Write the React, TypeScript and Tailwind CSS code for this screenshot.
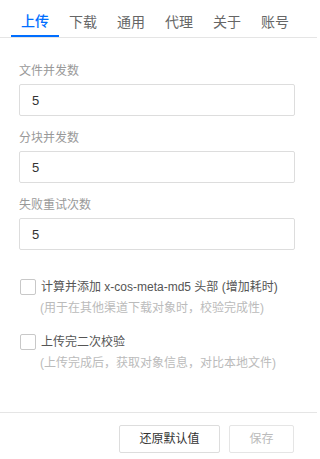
import { useState } from 'react';

const tabs = ['上传', '下载', '通用', '代理', '关于', '账号'];

const fields = [
  { id: 'fileConcurrency', label: '文件并发数', value: '5' },
  { id: 'chunkConcurrency', label: '分块并发数', value: '5' },
  { id: 'retryCount', label: '失败重试次数', value: '5' },
];

const options = [
  {
    id: 'md5',
    label: '计算并添加 x-cos-meta-md5 头部 (增加耗时)',
    hint: '(用于在其他渠道下载对象时，校验完成性)',
  },
  {
    id: 'verify',
    label: '上传完二次校验',
    hint: '(上传完成后，获取对象信息，对比本地文件)',
  },
];

const App = () => {
  const [activeTab, setActiveTab] = useState(0);
  const [values, setValues] = useState<Record<string, string>>(
    Object.fromEntries(fields.map((field) => [field.id, field.value]))
  );
  const [checked, setChecked] = useState<Record<string, boolean>>({});

  return (
    <div
      className="flex h-[459px] w-[317px] flex-col bg-white"
      style={{ fontFamily: '"Liberation Sans", "Noto Sans CJK SC", sans-serif' }}
    >
      <div className="flex h-[38px] border-b border-[#e5e5e5] pl-[11px]">
        {tabs.map((tab, index) => (
          <button
            type="button"
            key={tab}
            onClick={() => setActiveTab(index)}
            className={
              index === activeTab
                ? 'h-[37px] w-12 border-b-2 border-[#006eff] pt-[6px] text-[14px] leading-[20px] font-medium text-[#006eff]'
                : 'h-[37px] w-12 pt-[6px] text-[14px] leading-[20px] text-[#666]'
            }
          >
            <span className="block text-center">{tab}</span>
          </button>
        ))}
      </div>

      <div className="flex-1 pt-[24px] pl-[19px] pr-[22px]">
        {fields.map((field) => (
          <div key={field.id} className="mb-[13px]">
            <div className="mb-1 text-[12px] leading-[18px] text-[#999]">{field.label}</div>
            <input
              value={values[field.id]}
              onChange={(event) => setValues((prev) => ({ ...prev, [field.id]: event.target.value }))}
              className="h-[32px] w-full rounded-[2px] border border-[#ddd] px-[12px] text-[13px] text-[#333] outline-none"
            />
          </div>
        ))}

        <div className="mt-[27px] flex flex-col gap-[14px]">
          {options.map((option) => (
            <label key={option.id} className="block cursor-pointer">
              <div className="flex h-[20px] items-center">
                <input
                  type="checkbox"
                  checked={!!checked[option.id]}
                  onChange={(event) => setChecked((prev) => ({ ...prev, [option.id]: event.target.checked }))}
                  className="sr-only"
                />
                <span className="mr-[5px] ml-px h-[16px] w-[16px] rounded-[2px] border border-[#c8c8c8] bg-white" />
                <span className="text-[12px] leading-[20px] text-[#555]">{option.label}</span>
              </div>
              <div className="mt-px pl-[21px] text-[12px] leading-[20px] text-[#bbb]">{option.hint}</div>
            </label>
          ))}
        </div>
      </div>

      <div className="flex justify-end gap-[9px] border-t border-[#e5e5e5] pt-[12px] pr-[23px] pb-[6px]">
        <button
          type="button"
          className="h-[28px] w-[101px] rounded-[2px] border border-[#ddd] bg-white text-[12px] text-[#333]"
        >
          还原默认值
        </button>
        <button
          type="button"
          disabled
          className="h-[28px] w-[65px] rounded-[2px] border border-[#e5e5e5] bg-white text-[12px] text-[#bbb]"
        >
          保存
        </button>
      </div>
    </div>
  );
};

export default App;
